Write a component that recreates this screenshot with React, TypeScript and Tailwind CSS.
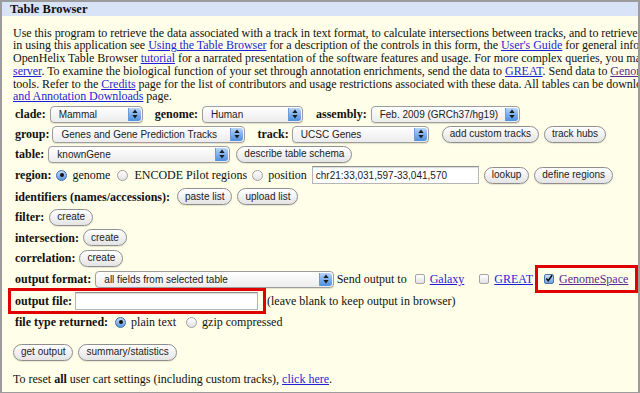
import React from 'react';

const sans = "font-['Liberation_Sans',Arial,sans-serif]";

const Stepper: React.FC = () => (
  <span className="m-[1px] flex w-[13px] shrink-0 items-center justify-center self-stretch rounded-r-[3px] border-l border-[#6f9bd6] bg-linear-to-b from-[#b7d5f7] via-[#7fb0ec] to-[#4d8fe0]">
    <svg width="6" height="10" viewBox="0 0 6 10">
      <path d="M3 0.5 L5.6 4 H0.4 Z" fill="#1b1b1b" />
      <path d="M3 9.5 L5.6 6 H0.4 Z" fill="#1b1b1b" />
    </svg>
  </span>
);

const Select: React.FC<{ value: string; className: string }> = ({ value, className }) => (
  <div
    className={`flex h-[17px] items-center rounded-[4px] border border-[#9d9d9d] bg-linear-to-b from-white to-[#ececec] text-[10px] text-[#1c1c1c] shadow-[0_1px_1px_rgba(0,0,0,0.12)] ${sans} ${className}`}
  >
    <span className="flex-1 truncate pl-[8px]">{value}</span>
    <Stepper />
  </div>
);

const Btn: React.FC<{ children: React.ReactNode; className?: string }> = ({ children, className = '' }) => (
  <button
    type="button"
    className={`inline-flex h-[17px] items-center rounded-full border border-[#8e8e8e] bg-linear-to-b from-white to-[#e4e4e4] px-[7px] text-[10px] leading-none text-[#1c1c1c] shadow-[0_1px_1px_rgba(0,0,0,0.1)] ${sans} ${className}`}
  >
    {children}
  </button>
);

const Radio: React.FC<{ on?: boolean; className?: string }> = ({ on, className = '' }) => (
  <span
    className={`inline-flex h-[11px] w-[11px] shrink-0 items-center justify-center rounded-full border ${
      on
        ? 'border-[#3f6eae] bg-linear-to-b from-[#c4dcf7] to-[#5c97dd]'
        : 'border-[#a2a2a2] bg-linear-to-b from-white to-[#e2e2e2]'
    } ${className}`}
  >
    {on && <span className="h-[4px] w-[4px] rounded-full bg-[#151515]" />}
  </span>
);

const Check: React.FC<{ on?: boolean; className?: string }> = ({ on, className = '' }) => (
  <span
    className={`inline-flex h-[10px] w-[10px] shrink-0 items-center justify-center rounded-[2px] border ${
      on
        ? 'border-[#4a74ad] bg-linear-to-b from-[#cfe2f8] to-[#6d9fdc]'
        : 'border-[#a5a5a5] bg-linear-to-b from-white to-[#e3e3e3]'
    } ${className}`}
  >
    {on && (
      <svg width="9" height="9" viewBox="0 0 9 9" className="-mt-[2px]">
        <path d="M1.5 4.5 L3.6 7 L8 0.8" stroke="#111" strokeWidth="1.8" fill="none" />
      </svg>
    )}
  </span>
);

const A: React.FC<{ children: React.ReactNode; visited?: boolean }> = ({ children, visited }) => (
  <a href="#" className={`underline ${visited ? 'text-[#5a2a8c]' : 'text-[#1f1fd8]'}`}>
    {children}
  </a>
);

const Row: React.FC<{ h: string; children: React.ReactNode; className?: string }> = ({ h, children, className = '' }) => (
  <div className={`flex items-center whitespace-nowrap pl-[13px] ${h} ${className}`}>{children}</div>
);

export default function App() {
  return (
    <div className="h-[393px] w-[640px] overflow-hidden bg-white">
      <div className="flex h-[393px] w-[640px] flex-col overflow-hidden border-t-2 border-r-2 border-b border-l-2 border-[#9c9c9c] bg-[#fffee9] font-['Liberation_Serif','Times_New_Roman',serif] text-[12px] text-[#111]">
        <div className="flex h-[14px] shrink-0 items-center bg-[#d9e3f7] pl-[8px] text-[12.5px] font-bold">
          Table Browser
        </div>

        {/* the panel is narrower than the intro text, so its lines run past the right edge */}
        <div className="mt-[10.5px] whitespace-nowrap pl-[11px] leading-[12.8px] tracking-[-0.04px]">
          <div>
            Use this program to retrieve the data associated with a track in text format, to calculate intersections between tracks, and to retrieve
          </div>
          <div>
            in using this application see <A>Using the Table Browser</A> for a description of the controls in this form, the{' '}
            <A>User's Guide</A> for general information
          </div>
          <div>
            OpenHelix Table Browser <A>tutorial</A> for a narrated presentation of the software features and usage. For more complex queries, you may
          </div>
          <div>
            <A>server</A>. To examine the biological function of your set through annotation enrichments, send the data to <A>GREAT</A>. Send
            data to <A visited>GenomeSpace</A>
          </div>
          <div>
            tools. Refer to the <A>Credits</A> page for the list of contributors and usage restrictions associated with these data. All tables can be downloaded
          </div>
          <div>
            <A>and Annotation Downloads</A> page.
          </div>
        </div>

        <Row h="h-[20px]" className="mt-px">
          <b>clade:</b>
          <Select value="Mammal" className="ml-[4px] w-[93px]" />
          <b className="ml-[12px]">genome:</b>
          <Select value="Human" className="ml-[4px] w-[101px]" />
          <b className="ml-[13px]">assembly:</b>
          <Select value="Feb. 2009 (GRCh37/hg19)" className="ml-[4px] w-[149px]" />
        </Row>

        <Row h="h-[20px]">
          <b>group:</b>
          <Select value="Genes and Gene Prediction Tracks" className="ml-[3px] w-[193px]" />
          <b className="ml-[12px]">track:</b>
          <Select value="UCSC Genes" className="ml-[3px] w-[137px]" />
          <Btn className="ml-[13px]">add custom tracks</Btn>
          <Btn className="ml-[5px]">track hubs</Btn>
        </Row>

        <Row h="h-[20px]">
          <b>table:</b>
          <Select value="knownGene" className="ml-[4px] w-[182px]" />
          <Btn className="ml-[6px]">describe table schema</Btn>
        </Row>

        <Row h="h-[22px]">
          <b>region:</b>
          <Radio on className="ml-[5px]" />
          <span className="ml-[5px]">genome</span>
          <Radio className="ml-[7px]" />
          <span className="ml-[6px]">ENCODE Pilot regions</span>
          <Radio className="ml-[5px]" />
          <span className="ml-[5px]">position</span>
          <input
            readOnly
            value="chr21:33,031,597-33,041,570"
            className={`ml-[5px] h-[18px] w-[167px] border border-[#b5b5b5] border-t-[#8f8f8f] bg-white px-[3px] text-[10px] text-[#1c1c1c] shadow-[inset_0_1px_1px_rgba(0,0,0,0.15)] outline-none ${sans}`}
          />
          <Btn className="ml-[5px]">lookup</Btn>
          <Btn className="ml-[5px]">define regions</Btn>
        </Row>

        <Row h="h-[21px]">
          <b>identifiers (names/accessions):</b>
          <Btn className="ml-[7px]">paste list</Btn>
          <Btn className="ml-[5px]">upload list</Btn>
        </Row>

        <Row h="h-[20px]">
          <b>filter:</b>
          <Btn className="ml-[5px]">create</Btn>
        </Row>

        <Row h="h-[21px]">
          <b>intersection:</b>
          <Btn className="ml-[4px]">create</Btn>
        </Row>

        <Row h="h-[20px]">
          <b>correlation:</b>
          <Btn className="ml-[4px]">create</Btn>
        </Row>

        <Row h="h-[22px]">
          <b>output format:</b>
          <Select value="all fields from selected table" className="ml-[4px] w-[242px]" />
          <span className="ml-[3px]">Send output to</span>
          <Check className="ml-[8px]" />
          <span className="ml-[5px]">
            <A>Galaxy</A>
          </span>
          <Check className="ml-[15px]" />
          <span className="ml-[5px]">
            <A>GREAT</A>
          </span>
          <span className="ml-[2px] flex h-[28px] w-[103px] shrink-0 items-center border-[3px] border-[#e00000] pl-[6px]">
            <Check on />
            <span className="ml-[5px]">
              <A visited>GenomeSpace</A>
            </span>
          </span>
        </Row>

        <Row h="h-[22px]" className="!pl-[6px]">
          <span className="flex h-[26px] shrink-0 items-center border-[3px] border-[#e00000] pr-[5px] pl-[4px]">
            <b>output file:</b>
            <input
              readOnly
              value=""
              className="ml-[3px] h-[18px] w-[183px] border border-[#b5b5b5] border-t-[#8f8f8f] bg-white shadow-[inset_0_1px_1px_rgba(0,0,0,0.15)] outline-none"
            />
          </span>
          <span className="ml-px">(leave blank to keep output in browser)</span>
        </Row>

        <Row h="h-[20px]">
          <b>file type returned:</b>
          <Radio on className="ml-[7px]" />
          <span className="ml-[5px]">plain text</span>
          <Radio className="ml-[10px]" />
          <span className="ml-[5px]">gzip compressed</span>
        </Row>

        <Row h="h-[20px]" className="mt-[10px] !pl-[11px]">
          <Btn>get output</Btn>
          <Btn className="ml-[5px]">summary/statistics</Btn>
        </Row>

        <Row h="h-[20px]" className="mt-[7px] !pl-[11px]">
          <span>
            To reset <b>all</b> user cart settings (including custom tracks), <A>click here</A>.
          </span>
        </Row>
      </div>
    </div>
  );
}
